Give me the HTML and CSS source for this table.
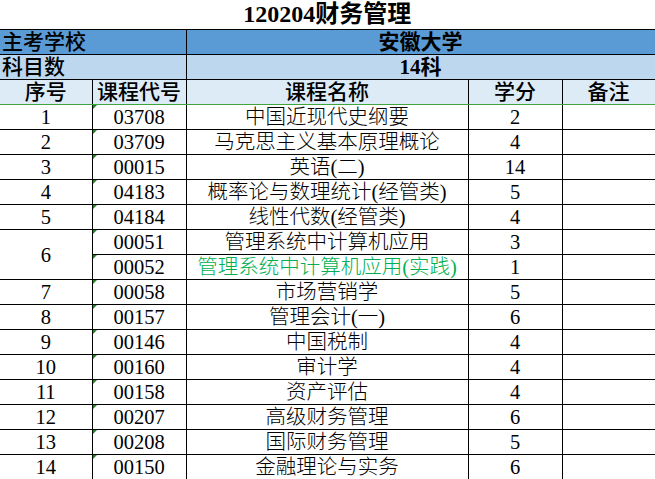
FILE: index.html
```html
<!DOCTYPE html>
<html lang="zh-CN">
<head>
<meta charset="utf-8">
<title>120204财务管理</title>
<link rel="stylesheet" href="styles.css">
</head>
<body>
<table class="sheet">
  <colgroup>
    <col class="c1"><col class="c2"><col class="c3"><col class="c4"><col class="c5">
  </colgroup>
  <tr class="title-row"><td colspan="5" class="title">120204财务管理</td></tr>
  <tr class="school-row"><td colspan="2" class="label">主考学校</td><td colspan="3" class="value">安徽大学</td></tr>
  <tr class="count-row"><td colspan="2" class="label">科目数</td><td colspan="3" class="value">14科</td></tr>
  <tr class="head-row"><th>序号</th><th>课程代号</th><th>课程名称</th><th>学分</th><th>备注</th></tr>
  <tr><td>1</td><td class="code">03708</td><td>中国近现代史纲要</td><td>2</td><td></td></tr>
  <tr><td>2</td><td class="code">03709</td><td>马克思主义基本原理概论</td><td>4</td><td></td></tr>
  <tr><td>3</td><td class="code">00015</td><td>英语(二)</td><td>14</td><td></td></tr>
  <tr><td>4</td><td class="code">04183</td><td>概率论与数理统计(经管类)</td><td>5</td><td></td></tr>
  <tr><td>5</td><td class="code">04184</td><td>线性代数(经管类)</td><td>4</td><td></td></tr>
  <tr><td rowspan="2">6</td><td class="code">00051</td><td>管理系统中计算机应用</td><td>3</td><td></td></tr>
  <tr><td class="code">00052</td><td class="practice">管理系统中计算机应用(实践)</td><td>1</td><td></td></tr>
  <tr><td>7</td><td class="code">00058</td><td>市场营销学</td><td>5</td><td></td></tr>
  <tr><td>8</td><td class="code">00157</td><td>管理会计(一)</td><td>6</td><td></td></tr>
  <tr><td>9</td><td class="code">00146</td><td>中国税制</td><td>4</td><td></td></tr>
  <tr><td>10</td><td class="code">00160</td><td>审计学</td><td>4</td><td></td></tr>
  <tr><td>11</td><td class="code">00158</td><td>资产评估</td><td>4</td><td></td></tr>
  <tr><td>12</td><td class="code">00207</td><td>高级财务管理</td><td>6</td><td></td></tr>
  <tr><td>13</td><td class="code">00208</td><td>国际财务管理</td><td>5</td><td></td></tr>
  <tr><td>14</td><td class="code">00150</td><td>金融理论与实务</td><td>6</td><td></td></tr>
</table>
</body>
</html>
```

FILE: styles.css
```css
html, body {
  margin: 0;
  padding: 0;
  background: #ffffff;
}

.sheet {
  border-collapse: collapse;
  table-layout: fixed;
  width: 655px;
  font-family: "Liberation Serif", "Noto Sans CJK SC", serif;
  font-size: 20.5px;
  color: #000;
}

.c1 { width: 92px; }
.c2 { width: 94px; }
.c3 { width: 282px; }
.c4 { width: 94px; }
.c5 { width: 93px; }

.sheet td,
.sheet th {
  border: 1px solid #000;
  padding: 0;
  height: 24px;
  line-height: 24px;
  text-align: center;
  vertical-align: middle;
  white-space: nowrap;
  font-weight: 300;
}

.sheet tr > :first-child {
  border-left: none;
}

.sheet .title-row td {
  height: 29px;
  border-top: none;
  font-size: 24px;
  font-weight: bold;
  line-height: 29px;
}

.sheet .school-row td {
  background: #5b9bd5;
}

.sheet .count-row td {
  background: #bdd7ee;
}

.sheet .label {
  text-align: left;
  padding-left: 2px;
  font-family: "Liberation Sans", "Noto Sans CJK SC", sans-serif;
  font-weight: 500;
  font-size: 21px;
}

.sheet .value {
  font-weight: bold;
  font-size: 21px;
}

.sheet .head-row th {
  background: #ddebf7;
  font-family: "Liberation Sans", "Noto Sans CJK SC", sans-serif;
  font-weight: 500;
  font-size: 21px;
  border-bottom: 1px solid #3fa33f;
}

.sheet .code {
  position: relative;
}

.sheet .code::before {
  content: "";
  position: absolute;
  left: 0;
  top: 0;
  border-top: 4px solid #1b8a1b;
  border-right: 4px solid transparent;
}

.sheet .practice {
  color: #00b050;
}
```
